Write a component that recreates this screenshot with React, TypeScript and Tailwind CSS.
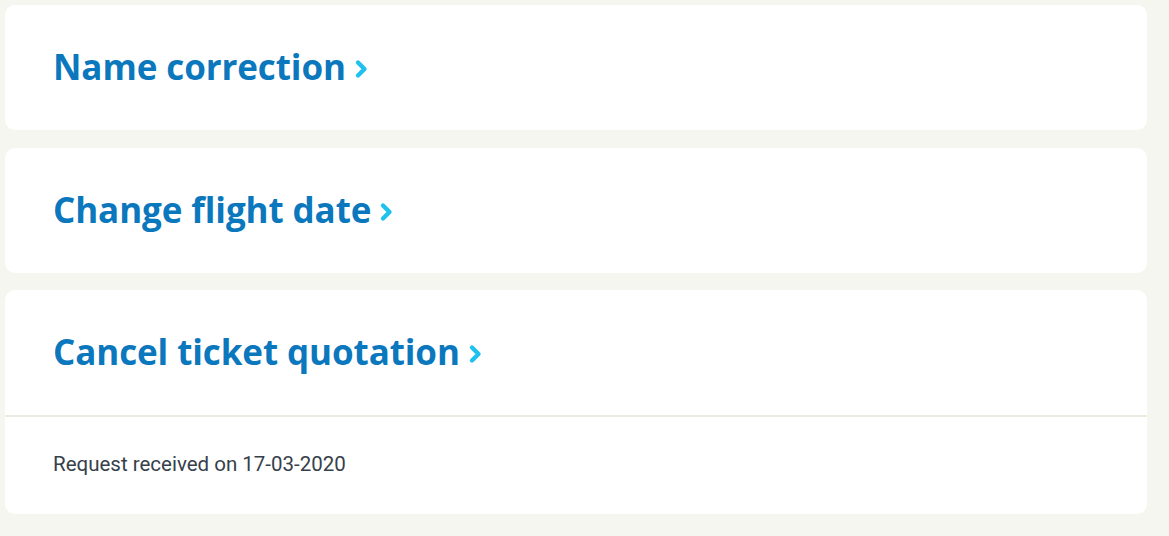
import React from "react";

const Chevron = () => (
  <svg width="15" height="20" viewBox="0 0 15 20" className="ml-[8px] mt-[6px]">
    <path d="M4 3.5 L10.5 10 L4 16.5" fill="none" stroke="#1fc1ee" strokeWidth="4.4" strokeLinecap="round" strokeLinejoin="round" />
  </svg>
);

function Title({ children }: { children: React.ReactNode }) {
  return (
    <div className="flex items-center">
      <span className="text-[35px] font-bold leading-none text-[#0b77bd] tracking-[-0.1px]" style={{ fontFamily: "'Open Sans', Lato, sans-serif" }}>
        {children}
      </span>
      <Chevron />
    </div>
  );
}

export default function App() {
  const items = ["Name correction", "Change flight date"];
  return (
    <div className="min-h-[536px] w-full bg-[#f6f6f1] pl-[5px] pr-[22px] pt-[5px] pb-[22px]">
      <div className="flex flex-col gap-[18px]">
        {items.map((t) => (
          <div key={t} className="flex h-[125px] items-center rounded-[10px] bg-white pl-[48px] pb-[3px]">
            <Title>{t}</Title>
          </div>
        ))}
        <div className="-mt-px rounded-[10px] bg-white">
          <div className="flex h-[125px] items-center pl-[48px] pb-[3px]">
            <Title>Cancel ticket quotation</Title>
          </div>
          <div className="h-[2px] bg-[#ebebe2]" />
          <div className="flex h-[97px] items-center pl-[48px] pb-[2px]">
            <span className="text-[20.5px] text-[#36404a]" style={{ fontFamily: "Roboto, sans-serif" }}>
              Request received on 17-03-2020
            </span>
          </div>
        </div>
      </div>
    </div>
  );
}
